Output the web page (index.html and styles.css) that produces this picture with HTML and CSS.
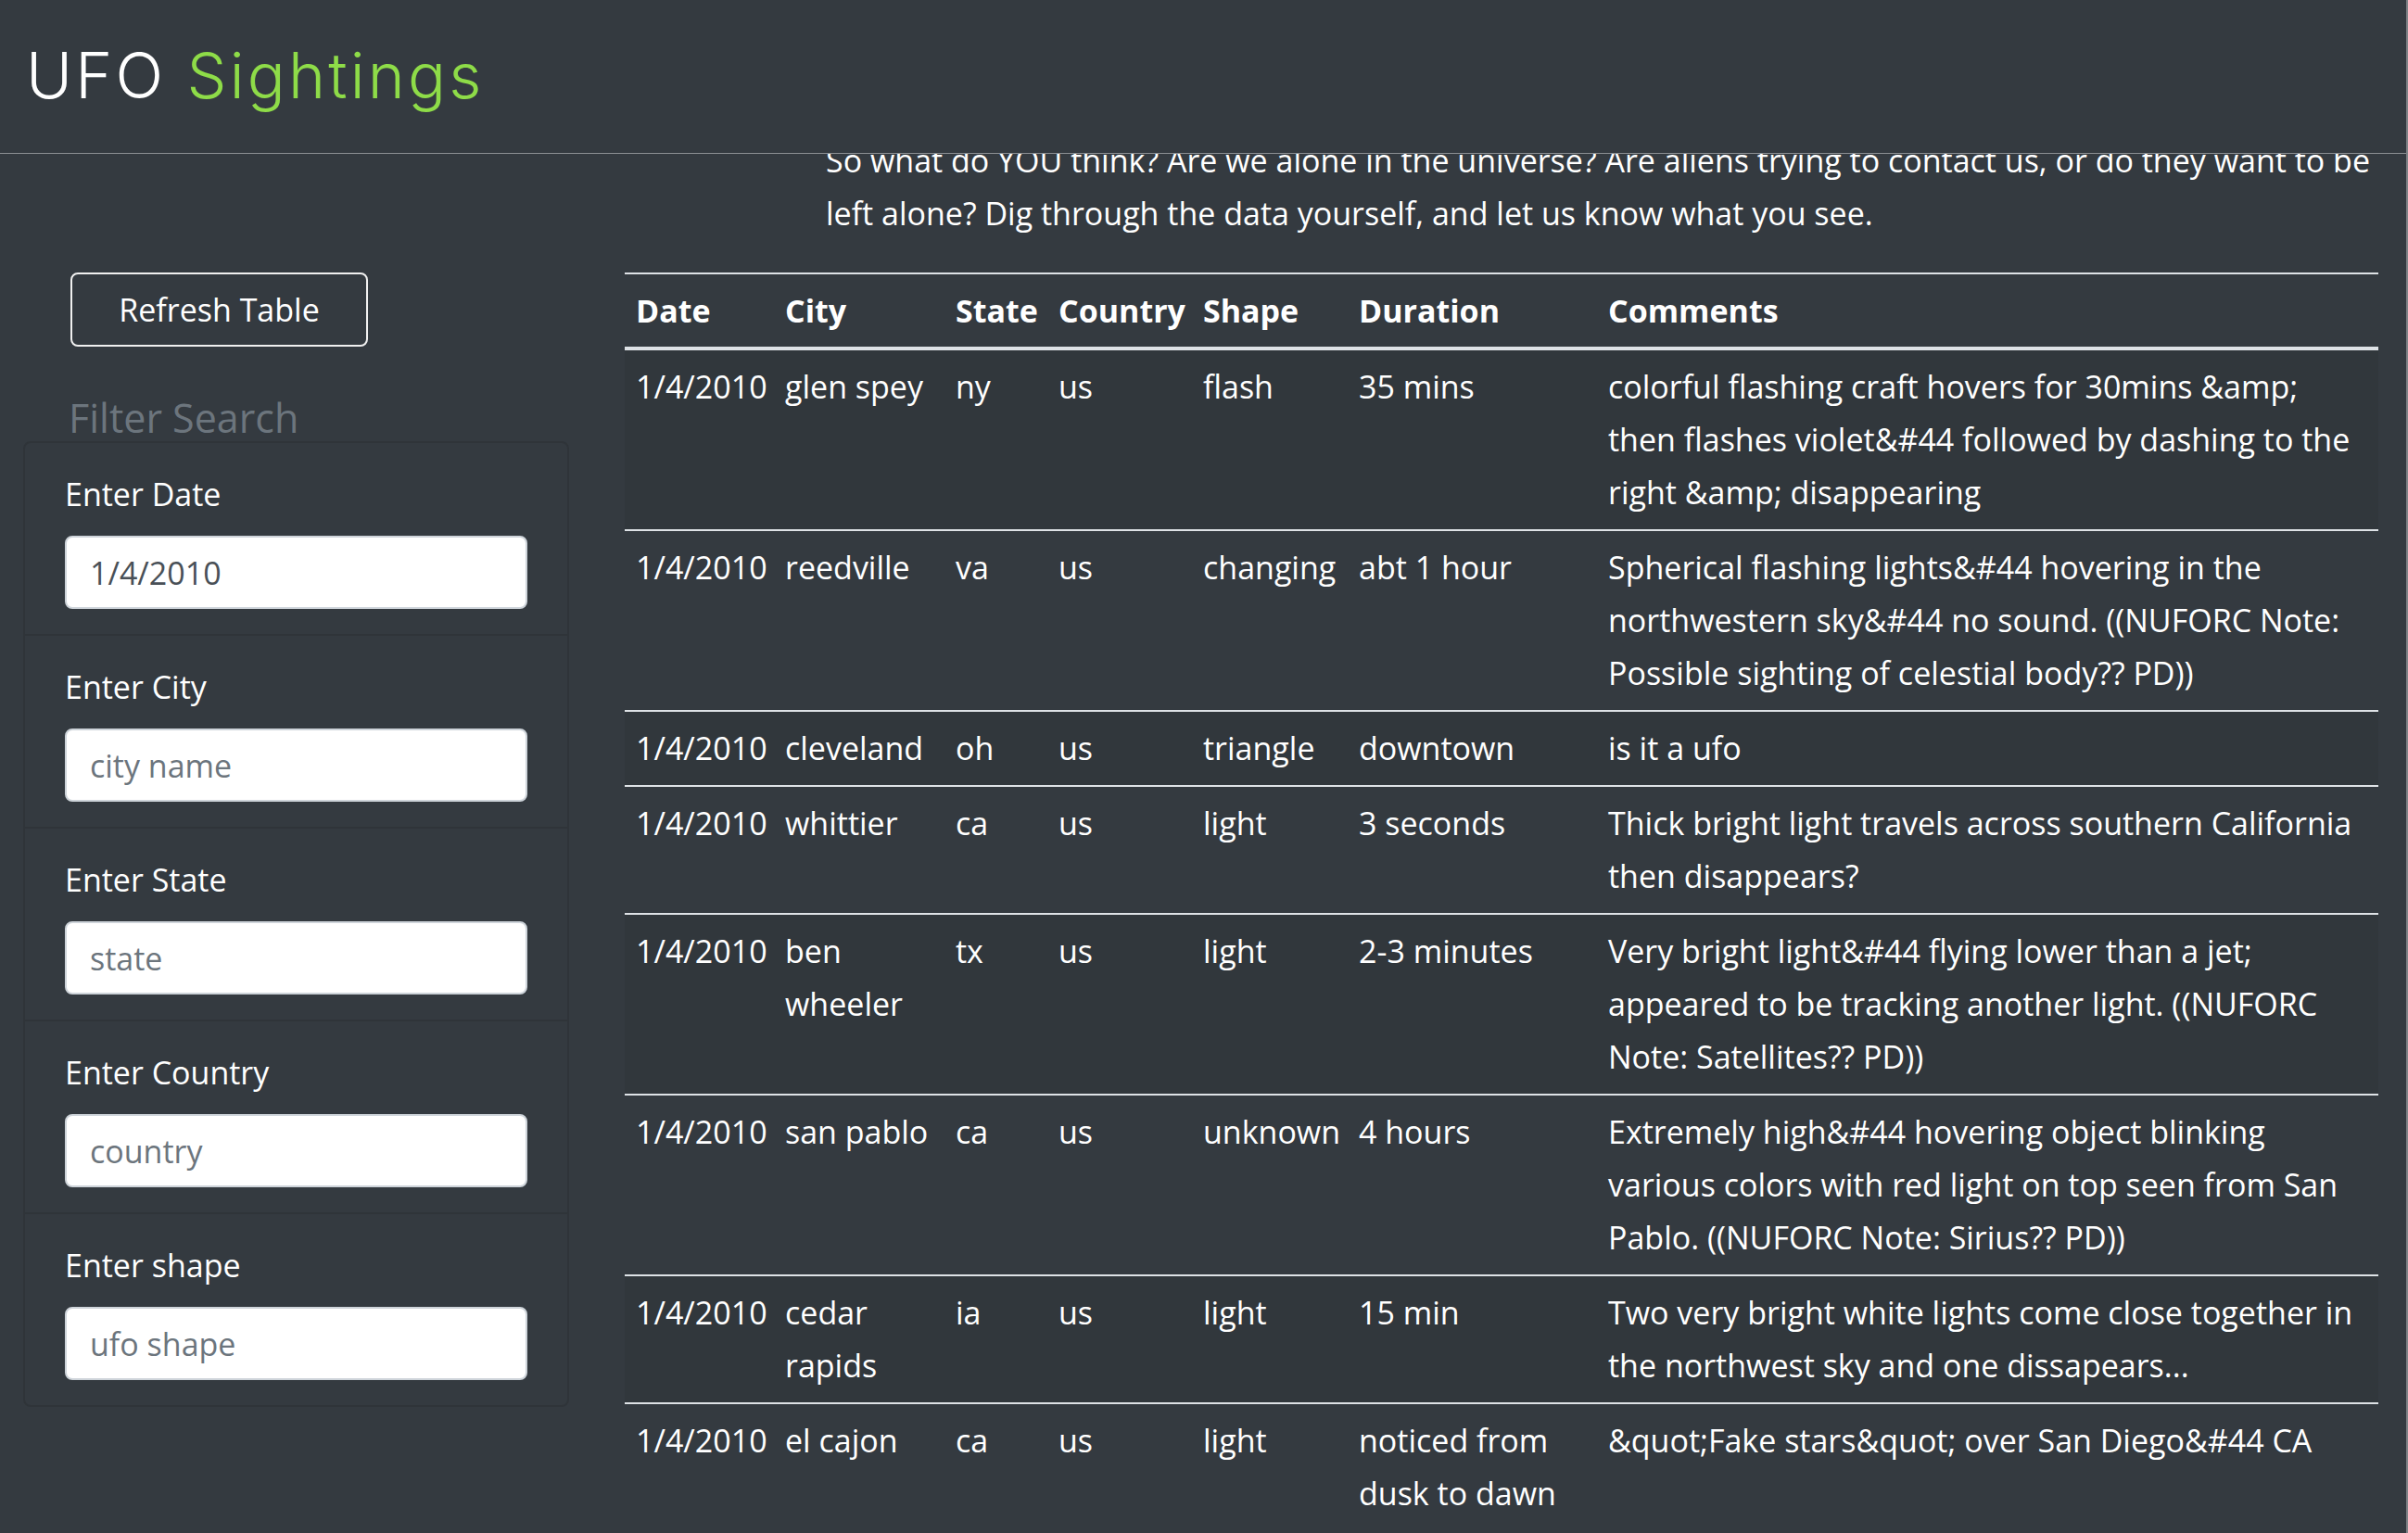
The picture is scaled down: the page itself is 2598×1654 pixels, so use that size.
FILE: index.html
```html
<!DOCTYPE html>
<html lang="en">
<head>
<meta charset="utf-8">
<title>UFO Sightings</title>
<link rel="stylesheet" href="styles.css">
</head>
<body>
<header class="topbar">
  <h1 class="brand"><span class="brand-ufo">UFO</span> <span class="brand-green">Sightings</span></h1>
</header>
<div class="scroll-edge"></div>

<main class="content">
  <p class="intro">So what do YOU think? Are we alone in the universe? Are aliens trying to contact us, or do they want to be left alone? Dig through the data yourself, and let us know what you see.</p>

  <div class="layout">
    <aside class="sidebar">
      <button class="refresh" type="button">Refresh Table</button>
      <h3 class="filter-title">Filter Search</h3>
      <ul class="filters">
        <li class="filter-item">
          <label class="filter-label" for="datetime">Enter Date</label>
          <input class="filter-input" id="datetime" type="text" value="1/4/2010" placeholder="1/11/2010">
        </li>
        <li class="filter-item">
          <label class="filter-label" for="city">Enter City</label>
          <input class="filter-input" id="city" type="text" placeholder="city name">
        </li>
        <li class="filter-item">
          <label class="filter-label" for="state">Enter State</label>
          <input class="filter-input" id="state" type="text" placeholder="state">
        </li>
        <li class="filter-item">
          <label class="filter-label" for="country">Enter Country</label>
          <input class="filter-input" id="country" type="text" placeholder="country">
        </li>
        <li class="filter-item">
          <label class="filter-label" for="shape">Enter shape</label>
          <input class="filter-input" id="shape" type="text" placeholder="ufo shape">
        </li>
      </ul>
    </aside>

    <table class="sightings">
      <colgroup>
        <col class="c-date"><col class="c-city"><col class="c-state"><col class="c-country"><col class="c-shape"><col class="c-duration"><col class="c-comments">
      </colgroup>
      <thead>
        <tr><th>Date</th><th>City</th><th>State</th><th>Country</th><th>Shape</th><th>Duration</th><th>Comments</th></tr>
      </thead>
      <tbody>
        <tr><td>1/4/2010</td><td>glen spey</td><td>ny</td><td>us</td><td>flash</td><td>35 mins</td><td>colorful flashing craft hovers for 30mins &amp;amp; then flashes violet&amp;#44 followed by dashing to the right &amp;amp; disappearing</td></tr>
        <tr><td>1/4/2010</td><td>reedville</td><td>va</td><td>us</td><td>changing</td><td>abt 1 hour</td><td>Spherical flashing lights&amp;#44 hovering in the northwestern sky&amp;#44 no sound. ((NUFORC Note: Possible sighting of celestial body?? PD))</td></tr>
        <tr><td>1/4/2010</td><td>cleveland</td><td>oh</td><td>us</td><td>triangle</td><td>downtown</td><td>is it a ufo</td></tr>
        <tr><td>1/4/2010</td><td>whittier</td><td>ca</td><td>us</td><td>light</td><td>3 seconds</td><td>Thick bright light travels across southern California then disappears?</td></tr>
        <tr><td>1/4/2010</td><td>ben wheeler</td><td>tx</td><td>us</td><td>light</td><td>2-3 minutes</td><td>Very bright light&amp;#44 flying lower than a jet; appeared to be tracking another light. ((NUFORC Note: Satellites?? PD))</td></tr>
        <tr><td>1/4/2010</td><td>san pablo</td><td>ca</td><td>us</td><td>unknown</td><td>4 hours</td><td>Extremely high&amp;#44 hovering object blinking various colors with red light on top seen from San Pablo. ((NUFORC Note: Sirius?? PD))</td></tr>
        <tr><td>1/4/2010</td><td>cedar rapids</td><td>ia</td><td>us</td><td>light</td><td>15 min</td><td>Two very bright white lights come close together in the northwest sky and one dissapears...</td></tr>
        <tr><td>1/4/2010</td><td>el cajon</td><td>ca</td><td>us</td><td>light</td><td>noticed from dusk to dawn</td><td>&amp;quot;Fake stars&amp;quot; over San Diego&amp;#44 CA</td></tr>
      </tbody>
    </table>
  </div>
</main>
</body>
</html>
```

FILE: styles.css
```css
html, body {
  margin: 0;
  padding: 0;
}

body {
  background: #343a40;
  color: #ffffff;
  font-family: "Open Sans", "Noto Sans", "Liberation Sans", sans-serif;
  font-size: 34px;
  line-height: 57px;
  overflow: hidden;
}

/* fixed top bar that overlays the scrolled content */
.topbar {
  position: fixed;
  top: 0;
  left: 0;
  right: 0;
  height: 166px;
  background: #343a40;
  border-bottom: 1px solid #8b8f93;
  z-index: 10;
  box-sizing: border-box;
  padding: 41px 0 0 28px;
}

.brand {
  margin: 0;
  font-family: "Inter", "Lato", "Noto Sans", sans-serif;
  font-weight: 300;
  font-size: 68px;
  line-height: 80px;
  letter-spacing: 3.2px;
  color: #ffffff;
}

.brand-green {
  color: #8edc48;
}

.scroll-edge {
  position: fixed;
  top: 0;
  right: 0;
  width: 2px;
  height: 100%;
  background: #7e8286;
  z-index: 11;
}

.content {
  padding-top: 145px;
}

.intro {
  margin: 0 32px 35px 891px;
}

.layout {
  display: flex;
  align-items: flex-start;
  padding: 0 32px 0 25px;
}

.sidebar {
  width: 589px;
  flex: none;
}

.refresh {
  display: block;
  margin: 0 0 0 51px;
  width: 321px;
  height: 80px;
  background: transparent;
  color: #ffffff;
  border: 2px solid #f0f0f0;
  border-radius: 8px;
  font-family: inherit;
  font-size: 34px;
  line-height: 48px;
  padding: 0;
}

.filter-title {
  margin: 52px 0 0 49px;
  font-weight: 400;
  font-size: 43px;
  line-height: 50px;
  color: #6c757d;
}

.filters {
  list-style: none;
  margin: 0;
  padding: 0;
  border: 2px solid #2f3439;
  border-radius: 8px;
}

.filter-item {
  padding: 31px 43px 27px;
  border-top: 2px solid #2f3439;
}

.filter-item:first-child {
  border-top: 0;
  padding-top: 31px;
}

.filter-label {
  display: block;
  font-size: 34px;
  line-height: 48px;
  margin-bottom: 21px;
  color: #ffffff;
}

.filter-input {
  display: block;
  box-sizing: border-box;
  width: 499px;
  height: 79px;
  margin: 0;
  padding: 0 25px;
  background: #ffffff;
  border: 2px solid #ced4da;
  border-radius: 8px;
  font-family: inherit;
  font-size: 34px;
  color: #495057;
}

.filter-input::placeholder {
  color: #6c757d;
  opacity: 1;
}

.sightings {
  margin-left: 60px;
  width: 1892px;
  table-layout: fixed;
  border-collapse: collapse;
}

.c-date { width: 161px; }
.c-city { width: 184px; }
.c-state { width: 111px; }
.c-country { width: 156px; }
.c-shape { width: 168px; }
.c-duration { width: 269px; }
.c-comments { width: 843px; }

.sightings th {
  text-align: left;
  font-weight: 700;
  padding: 11px 12px 10px;
  border-top: 2px solid #dee2e6;
  border-bottom: 4px solid #dee2e6;
  vertical-align: bottom;
}

.sightings td {
  padding: 11px 12px;
  border-top: 2px solid #dee2e6;
  vertical-align: top;
}

.sightings tbody tr:nth-child(odd) {
  background: rgba(0, 0, 0, 0.05);
}
```
